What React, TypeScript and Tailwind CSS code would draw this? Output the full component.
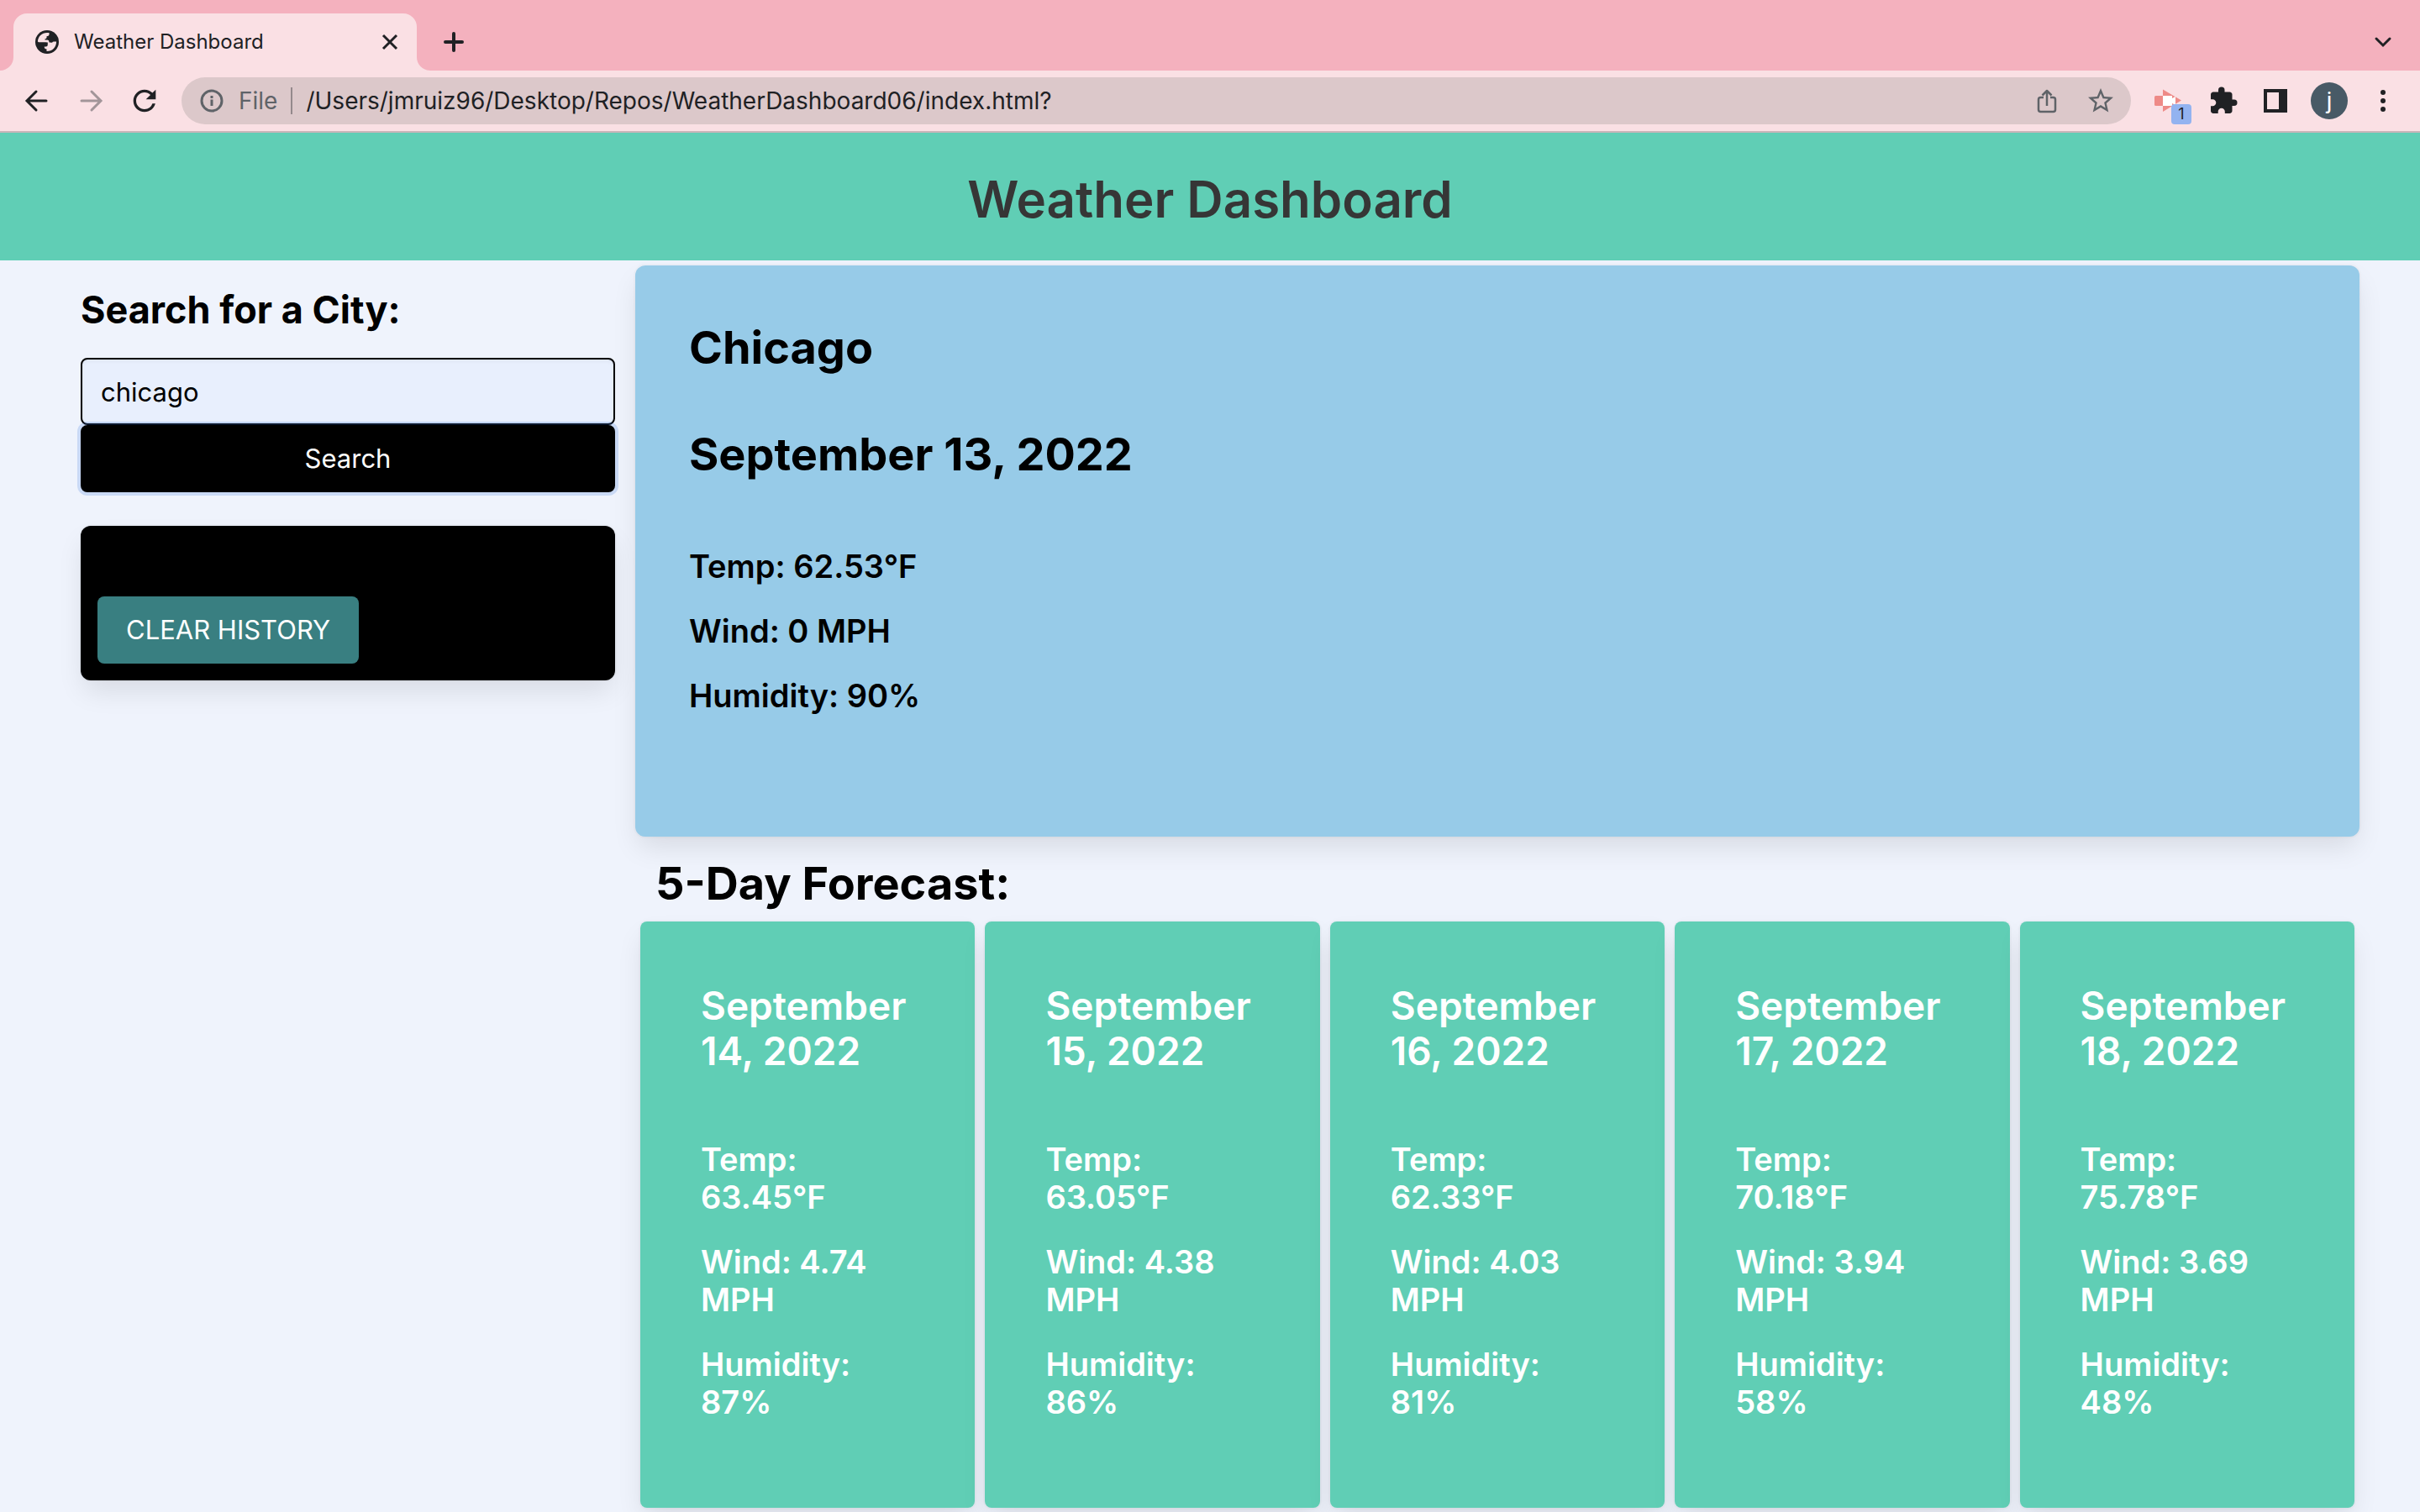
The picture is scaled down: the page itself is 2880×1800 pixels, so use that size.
import React from "react";
import { MdExtension, MdStarBorder, MdRefresh } from "react-icons/md";

const forecast = [
  { date: "September 14, 2022", temp: "63.45", wind: "4.74", humidity: 87 },
  { date: "September 15, 2022", temp: "63.05", wind: "4.38", humidity: 86 },
  { date: "September 16, 2022", temp: "62.33", wind: "4.03", humidity: 81 },
  { date: "September 17, 2022", temp: "70.18", wind: "3.94", humidity: 58 },
  { date: "September 18, 2022", temp: "75.78", wind: "3.69", humidity: 48 },
];

const boxShadow = "shadow-[0_16px_32px_-4px_rgba(10,10,10,0.1),0_0_0_2px_rgba(10,10,10,0.02)]";

function GlobeIcon() {
  return (
    <svg className="size-7" viewBox="0 0 28 28" aria-hidden="true">
      <circle cx="14" cy="14" r="14" fill="#202124" />
      <path
        d="M2.900 13.500C3 7.500 8 2.900 14 2.900L16.500 3.100V5.500Q16 7 13.500 7.200V9Q13.300 10 12 10.200H11.500V11.500H14.500Q16.500 11.700 16.600 14.500L20 14.800Q20.800 13.500 22 13.500H25.100C25.100 20 20.500 25.100 13.500 25.100V22.500Q11 22.300 10.800 20.500V19.500H13Q15 19 14.800 17V14.500Q13 14.300 12 14.300L4 14.200Z"
        fill="#fae0e4"
      />
    </svg>
  );
}

function TabStrip() {
  return (
    <div className="flex h-[84px] items-end bg-[#f4b1be] pl-4 pr-6">
      <div className="relative flex h-[68px] w-[480px] items-center rounded-t-2xl bg-[#fae0e4] pl-[26px] pr-4">
        <svg className="absolute bottom-0 -left-4 size-4" viewBox="0 0 16 16" aria-hidden="true">
          <path d="M16 0v16H0A16 16 0 0 0 16 0Z" fill="#fae0e4" />
        </svg>
        <svg className="absolute bottom-0 -right-4 size-4" viewBox="0 0 16 16" aria-hidden="true">
          <path d="M0 0v16h16A16 16 0 0 1 0 0Z" fill="#fae0e4" />
        </svg>
        <GlobeIcon />
        <span className="ml-[18px] flex-1 text-[24px] leading-8 text-[#202124]">Weather Dashboard</span>
        <button type="button" aria-label="Close tab" className="p-1">
          <svg className="size-6" viewBox="0 0 24 24" stroke="#202124" strokeWidth="3" aria-hidden="true">
            <path d="M4 4l16 16M20 4L4 20" />
          </svg>
        </button>
      </div>
      <button type="button" aria-label="New tab" className="ml-8 flex h-[68px] items-center">
        <svg className="size-6" viewBox="0 0 24 24" stroke="#202124" strokeWidth="4" strokeLinecap="round" aria-hidden="true">
          <path d="M12 2v20M2 12h20" />
        </svg>
      </button>
      <button type="button" aria-label="Search tabs" className="ml-auto flex h-[68px] items-center p-2">
        <svg className="size-6" viewBox="0 0 24 24" fill="none" stroke="#202124" strokeWidth="3" strokeLinecap="round" aria-hidden="true">
          <path d="M4 8l8 8 8-8" />
        </svg>
      </button>
    </div>
  );
}

function Toolbar() {
  return (
    <div className="flex h-[74px] items-center border-b-2 border-[#c9b5b9] bg-[#fae0e4] pl-7 pr-[30px] text-[#202124]">
      <div className="flex w-[188px] items-center">
        <button type="button" aria-label="Back">
          <svg className="size-8" viewBox="0 0 32 32" fill="none" stroke="#202124" strokeWidth="3" strokeLinecap="round" aria-hidden="true">
            <path d="M27 16H5M15 5L4 16l11 11" />
          </svg>
        </button>
        <button type="button" aria-label="Forward" disabled className="ml-8">
          <svg className="size-8" viewBox="0 0 32 32" fill="none" stroke="#a29599" strokeWidth="3" strokeLinecap="round" aria-hidden="true">
            <path d="M5 16h22M17 5l11 11-11 11" />
          </svg>
        </button>
        <button type="button" aria-label="Reload" className="ml-7">
          <MdRefresh className="size-10" />
        </button>
      </div>
      <div className="flex h-14 flex-1 items-center rounded-full bg-[#dcc8ca] pl-[22px] pr-[18px] text-[28px] leading-9">
        <svg className="size-7" viewBox="0 0 28 28" fill="none" stroke="#5f6368" strokeWidth="3" aria-hidden="true">
          <circle cx="14" cy="14" r="12" />
          <path d="M14 12.500v7.500M14 8v3" />
        </svg>
        <span className="ml-[18px] text-[#5f6368]">File</span>
        <span className="mx-4 h-8 w-0.5 bg-[#94898c]" />
        <input aria-label="Address" className="min-w-0 flex-1 bg-transparent outline-none" defaultValue="/Users/jmruiz96/Desktop/Repos/WeatherDashboard06/index.html?" />
        <button type="button" aria-label="Share">
          <svg className="h-8 w-7" viewBox="0 0 28 32" fill="none" stroke="#5f6368" strokeWidth="2.500" strokeLinejoin="round" aria-hidden="true">
            <path d="M10 12H6.500A2.500 2.500 0 0 0 4 14.500v12A2.500 2.500 0 0 0 6.500 29h15a2.500 2.500 0 0 0 2.500-2.500v-12a2.500 2.500 0 0 0-2.500-2.500H18M14 22V4.500M8.500 9.500L14 4l5.500 5.500" />
          </svg>
        </button>
        <button type="button" aria-label="Bookmark this page" className="ml-8 text-[#5f6368]">
          <MdStarBorder className="size-9" />
        </button>
      </div>
      <button type="button" aria-label="Screen recorder, 1 notification" className="relative ml-7 h-12 w-11">
        <svg className="size-8" viewBox="0 0 32 32" aria-hidden="true">
          <rect x="0" y="10" width="11" height="12" rx="1.500" fill="#ee8a87" />
          <path d="M10 2.500L32 15.500 10 29Z" fill="#ee8a87" />
          <path d="M10 10h11v3l4-2v10l-4-2v3H10Z" fill="#fff" />
        </svg>
        <span className="absolute bottom-[-4px] right-0 flex size-6 items-center justify-center rounded bg-[#93b3f0] text-[18px] leading-6">1</span>
      </button>
      <button type="button" aria-label="Extensions" className="ml-5">
        <MdExtension className="size-9" />
      </button>
      <button type="button" aria-label="Side panel" className="ml-[30px]">
        <svg className="size-7" viewBox="0 0 28 28" aria-hidden="true">
          <path fillRule="evenodd" d="M0 0h28v28H0ZM4 4v20h14V4Z" fill="#202124" />
        </svg>
      </button>
      <button type="button" aria-label="Profile" className="ml-7 flex size-11 items-center justify-center rounded-full bg-[#485a66] font-['Roboto',sans-serif] text-[28px] leading-8 text-white">j</button>
      <button type="button" aria-label="Menu" className="ml-7">
        <svg className="size-7" viewBox="0 0 28 28" fill="#202124" aria-hidden="true">
          <circle cx="14" cy="4" r="3" />
          <circle cx="14" cy="14" r="3" />
          <circle cx="14" cy="24" r="3" />
        </svg>
      </button>
    </div>
  );
}

function Sidebar() {
  return (
    <aside className="pt-8">
      <form onSubmit={(e) => e.preventDefault()}>
        <label htmlFor="city" className="block text-[45px] font-bold leading-[54px]">Search for a City:</label>
        <input
          id="city"
          defaultValue="chicago"
          className="mt-[30px] block h-20 w-full rounded-lg border-2 border-black bg-[#e8effd] px-[22px] text-[31px] shadow-[inset_0_2px_4px_rgba(10,10,10,0.05)] outline-none"
        />
        <button type="submit" className="block h-20 w-full rounded-lg bg-black text-[31px] text-white shadow-[0_0_0_4px_rgba(50,115,220,0.2)]">
          Search
        </button>
      </form>
      <section className={"mt-10 rounded-xl bg-black px-5 pb-5 pt-[84px] " + boxShadow}>
        <button type="button" className="h-20 rounded-lg bg-[#397f81] px-[34px] text-[31px] text-white">CLEAR HISTORY</button>
      </section>
    </aside>
  );
}

function Readings({ temp, wind, humidity }: { temp: string; wind: string; humidity: number }) {
  return (
    <div className="mt-20 space-y-8 text-[38px] font-semibold leading-[45px]">
      <p>Temp: {temp}°F</p>
      <p>Wind: {wind} MPH</p>
      <p>Humidity: {humidity}%</p>
    </div>
  );
}

export default function App() {
  return (
    <div className="min-h-screen bg-[#eff3fc] font-['Inter',sans-serif] text-black">
      <TabStrip />
      <Toolbar />
      <header className="bg-[#60ceb5] pb-[37px] pt-[43px] text-center">
        <h1 className="text-[60px] font-semibold leading-[72px] text-[#363636]">Weather Dashboard</h1>
      </header>
      <main className="grid grid-cols-[53fr_171fr] gap-6 pl-24 pr-[72px]">
        <Sidebar />
        <div className="min-w-0 pt-1.5">
          <section className={"rounded-xl bg-[#97cbe8] px-16 pb-[145px] pt-[66px] " + boxShadow}>
            <h2 className="text-[54px] font-bold leading-[63px]">Chicago</h2>
            <h2 className="mt-16 text-[54px] font-bold leading-[63px]">September 13, 2022</h2>
            <Readings temp="62.53" wind="0" humidity={90} />
          </section>
          <h2 className="mb-3.5 ml-6 mt-6 text-[54px] font-bold leading-[63px]">5-Day Forecast:</h2>
          <div className="grid grid-cols-5 gap-3 px-1.5">
            {forecast.map((day) => (
              <article key={day.date} className={"rounded-lg bg-[#60ceb5] px-[72px] pb-[103px] pt-[73px] text-white " + boxShadow}>
                <h3 className="text-[46px] font-semibold leading-[54px]">{day.date}</h3>
                <Readings temp={day.temp} wind={day.wind} humidity={day.humidity} />
              </article>
            ))}
          </div>
        </div>
      </main>
    </div>
  );
}
